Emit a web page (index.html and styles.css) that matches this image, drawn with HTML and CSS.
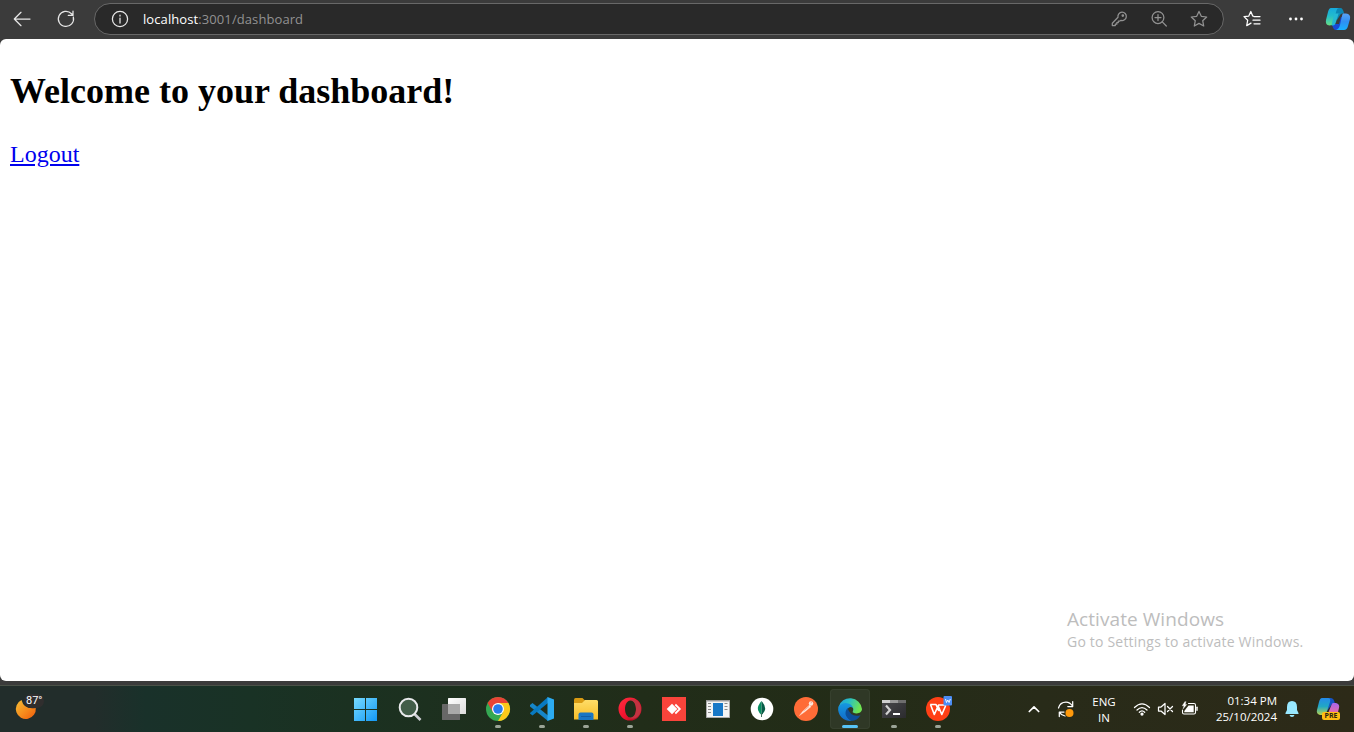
FILE: index.html
```html
<!DOCTYPE html>
<html lang="en">
<head>
<meta charset="utf-8">
<title>Dashboard</title>
<link rel="stylesheet" href="styles.css">
</head>
<body>
<div class="screen">
  <header class="toolbar">
    <button class="tool back" aria-label="Back"><svg width="18" height="16" viewBox="0 0 18 16" class="line light"><path d="M17 8H1.5M8 1.3L1.3 8L8 14.7"/></svg></button>
    <button class="tool reload" aria-label="Reload"><svg width="18" height="18" viewBox="0 0 18 18" class="line light"><path d="M16.3 7A7.6 7.6 0 1 1 14.5 3.7L16 5.3M16 1V5.4H11.3"/></svg></button>
    <div class="address">
      <svg class="line light info" width="18" height="18" viewBox="0 0 18 18"><circle cx="9" cy="9" r="7.6"/><path d="M9 8V13M9 5V6"/></svg>
      <span class="url"><b>localhost</b>:3001/dashboard</span>
      <div class="address-actions">
        <svg class="line dim" width="18" height="18" viewBox="0 0 18 18"><path d="M8 7.2A4.2 4.2 0 1 1 11 10.4L9.8 11H8.3V12.6H6.8V14.2H5.3V15.6H2.3V13.2L8 7.2"/><circle cx="12.8" cy="5.6" r=".7"/></svg>
        <svg class="line dim" width="18" height="18" viewBox="0 0 18 18"><circle cx="8" cy="7.6" r="5.9"/><path d="M12.3 11.9L16.3 16M5 7.6H11M8 4.6V10.6"/></svg>
        <svg class="line dim" width="18" height="18" viewBox="0 0 18 18"><path d="M9 1.4L11.3 6.3L16.7 7L12.7 10.7L13.7 16L9 13.4L4.3 16L5.3 10.7L1.3 7L6.7 6.3Z"/></svg>
      </div>
    </div>
    <button class="tool favorites" aria-label="Favorites"><svg width="18" height="18" viewBox="0 0 18 18" class="line white"><path d="M10.3 6.1H9.7L7.8 1.5L5.8 6.1L1 6.6L4.7 10.2L3.7 15.6L8 13.1M11 6.6H17M10 10.2H17M11 13.8H17"/></svg></button>
    <button class="tool more" aria-label="More"><svg width="16" height="4" viewBox="0 0 16 4"><g fill="#fff"><circle cx="2.5" cy="2" r="1.4"/><circle cx="8" cy="2" r="1.4"/><circle cx="13.5" cy="2" r="1.4"/></g></svg></button>
    <button class="tool copilot" aria-label="Copilot"><svg width="26" height="24" viewBox="0 0 26 24">
      <defs>
        <linearGradient id="ca" x1="0" y1="0" x2="0" y2="1"><stop stop-color="#16a9dd"/><stop offset=".45" stop-color="#22bccb"/><stop offset="1" stop-color="#68df83"/></linearGradient>
        <linearGradient id="cb" x1="0" y1="0" x2="0" y2="1"><stop stop-color="#5aa2f5"/><stop offset=".5" stop-color="#2f8ff2"/><stop offset="1" stop-color="#18b0ff"/></linearGradient>
      </defs>
      <path d="M7 17H14L16 10H20L18.500 18Q17.500 23 14 23H11Q8 23 7 17Z" fill="#1749d5"/>
      <path d="M6 1H15.500Q18 1 19 6.500H17Q15 7 14.500 9L12 13L9 7Z" fill="#0b86b4"/>
      <path d="M6 1H14Q12 1 11.300 4L8 16Q7.500 18.500 4.500 18.500Q0 18 1 13L3 5Q4 1 6 1Z" fill="url(#ca)"/>
      <path d="M8 12L6.500 18.500H8Q10 18.500 11 15L13.500 7Q14 6 15.500 6.500H9.500Z" fill="#25b8d4"/>
      <path d="M18 6.500H21Q26 7 25 12L23 19Q22 23 19 23H11Q14 22 15 18L17 9Q17.300 7 18 6.500Z" fill="url(#cb)"/>
    </svg></button>
  </header>

  <main class="page">
    <h2>Welcome to your dashboard!</h2>
    <a href="#">Logout</a>
    <aside class="activation"><div class="activation-title">Activate Windows</div><div class="activation-text">Go to Settings to activate Windows.</div></aside>
  </main>

  <footer class="taskbar">
    <div class="weather">
      <svg width="22" height="24" viewBox="0 0 22 24"><defs><linearGradient id="moon" x1="0" y1="0" x2="1" y2="1"><stop stop-color="#f5bd35"/><stop offset=".55" stop-color="#f58a1c"/><stop offset="1" stop-color="#ee5a0b"/></linearGradient></defs><path d="M6.500 4A10 10 0 1 0 20.800 12Q9 14 6.500 4Z" fill="url(#moon)"/></svg>
      <span class="temperature">87°</span>
    </div>
    <nav class="apps">
      <div class="app"><svg viewBox="0 0 24 24"><defs><linearGradient id="win" gradientUnits="userSpaceOnUse" x1="0" y1="0" x2="24" y2="24"><stop stop-color="#79dcff"/><stop offset="1" stop-color="#1197f5"/></linearGradient></defs><path fill="url(#win)" d="M0 1H11V12H0ZM12 1H23V12H12ZM0 13H11V24H0ZM12 13H23V24H12Z"/></svg></div>
      <div class="app"><svg viewBox="0 0 24 24"><path d="M16.500 17L22.500 23" stroke="#ced0d5" stroke-width="2.700"/><circle cx="10.500" cy="10.500" r="8.800" fill="#425d49" stroke="#e9eaec" stroke-width="2"/></svg></div>
      <div class="app"><svg viewBox="0 0 24 24"><defs><linearGradient id="tv" x1="0" y1="0" x2="1" y2="1"><stop stop-color="#fff"/><stop offset="1" stop-color="#dcdcdc"/></linearGradient></defs><rect x="6" y="1" width="18" height="16" rx=".6" fill="url(#tv)"/><rect y="7" width="18" height="16" rx=".6" fill="#676767"/><path d="M6 7H18V17H6Z" fill="#a9a9a9"/></svg></div>
      <div class="app running"><svg viewBox="0 0 24 24"><circle cx="12" cy="12" r="12" fill="#35a853"/><path d="M1.600 6A12 12 0 0 1 22.400 6H12L6.800 15Z" fill="#ea4335"/><path d="M12 6H22.400A12 12 0 0 1 12 24L17.200 15Z" fill="#fbc91b"/><circle cx="12" cy="12" r="6" fill="#fff"/><circle cx="12" cy="12" r="4.800" fill="#287bed"/></svg></div>
      <div class="app running"><svg viewBox="0 0 24 24"><path d="M0 8L2.500 6L18 18.500V24L0 9.500Z" fill="#1686c8"/><path d="M0 16L18 0V6L2.500 18.500L0 16.500Z" fill="#087ac1"/><path d="M17.500 0L24 2.500V21.500L17.500 24Z" fill="#2cacf2"/></svg></div>
      <div class="app running"><svg viewBox="0 0 24 24"><defs><linearGradient id="folder" x1="0" y1="0" x2="0" y2="1"><stop stop-color="#ffdd68"/><stop offset="1" stop-color="#f6bd28"/></linearGradient></defs><path d="M0 3Q0 1 1.500 1H8.500L11 3.500H22.500Q24 3.500 24 5V8H0Z" fill="#d99b13"/><path d="M0 6H8L11 3H22.500Q24 3 24 4.500V22.500H0Z" fill="url(#folder)"/><path d="M4.500 23V17.500Q4.500 15.500 6.500 15.500H17.500Q19.500 15.500 19.500 17.500V23Z" fill="#1976c4"/><path d="M7 19H17V20H7Z" fill="#125da4"/></svg></div>
      <div class="app running"><svg viewBox="0 0 24 24"><defs><linearGradient id="opera" x1="0" y1="0" x2="1" y2="1"><stop stop-color="#ff3040"/><stop offset=".5" stop-color="#f2142f"/><stop offset="1" stop-color="#a50920"/></linearGradient></defs><path fill-rule="evenodd" d="M12 .5A11.500 11.500 0 1 0 12 23.500A11.500 11.500 0 1 0 12 .5ZM13 3.200C16.300 3.200 18 7 18 12S16.300 20.800 13 20.800S7 17 7 12S9.500 3.200 13 3.200Z" fill="url(#opera)"/><path d="M10.500 3.500C16 0 23 4.500 23 12S16 24 10.500 20.500C15 21.500 18 17.500 18 12S15 2.500 10.500 3.500Z" fill="#c23341"/></svg></div>
      <div class="app"><svg viewBox="0 0 24 24"><path fill="#f9443b" d="M0 0H24V24H0Z"/><path d="M10 6.700L15.300 12L10 17.300L4.700 12Z" fill="#fff"/><path d="M13.300 7.500L17.800 12L13.300 16.500" fill="none" stroke="#fff" stroke-width="1.800"/></svg></div>
      <div class="app"><svg viewBox="0 0 24 24"><path fill="#999" d="M0 3H24V21H0Z"/><path fill="#f4f4f4" d="M.8 4.500H23.200V20.200H.8Z"/><path fill="#1878c7" d="M7 6H17V19H7Z"/><path d="M2 6.500H5M2 9.500H5M2 12.500H5M2 15.500H5M18.500 6.500H21.500M18.500 9.500H21.500M18.500 12.500H21.500" stroke="#8a8a8a"/></svg></div>
      <div class="app"><svg viewBox="0 0 24 24"><circle cx="12" cy="12" r="11.300" fill="#fff"/><path d="M11.500 4Q7 9 8 13Q9 16 11.500 18Z" fill="#078d60"/><path d="M11.500 4Q16 9 15 13Q14 16 11.500 18Z" fill="#075d48"/><path d="M11.500 16V20" stroke="#44725f"/></svg></div>
      <div class="app"><svg viewBox="0 0 24 24"><circle cx="12" cy="12" r="12" fill="#ff6c37"/><circle cx="17" cy="6.500" r="2.200" fill="#ffe9df"/><path d="M15.500 8L17 9.700L10.500 15L5.500 18.500L9 14Z" fill="#fff1e9" stroke="#ffd7c5" stroke-width=".5"/><path d="M9.500 14L15 9.500M16.500 6L18 5.500" stroke="#f38259" stroke-width=".6"/></svg></div>
      <div class="app active"><svg viewBox="0 0 24 24"><defs><linearGradient id="edge" x1="0" y1="0" x2="1" y2=".3"><stop stop-color="#229bda"/><stop offset=".45" stop-color="#27bfc8"/><stop offset="1" stop-color="#6ee451"/></linearGradient><linearGradient id="edgeb" x1="0" y1="0" x2="0" y2="1"><stop stop-color="#1599e0"/><stop offset="1" stop-color="#1269c7"/></linearGradient></defs><path d="M.5 10A12 12 0 0 1 24 12C24 16 19 17.500 15 15.500C14 14.800 16 13.500 15 11Q11 5 .5 10Z" fill="url(#edge)"/><path d="M.3 10Q4 5.500 9 6.200Q14 7 15 11Q12 8.500 9.500 12Q5.500 19 13.500 23.900A12 12 0 0 1 .3 10Z" fill="url(#edgeb)"/><path d="M9.500 11Q4 18.500 13.500 23.900Q19 24 22.500 18.200Q13 21 9.500 11Z" fill="#0c4f99"/></svg></div>
      <div class="app running"><svg viewBox="0 0 24 24"><defs><linearGradient id="term" x1="0" y1="0" x2="1" y2="1"><stop stop-color="#4a4a4d"/><stop offset="1" stop-color="#2b2b2e"/></linearGradient></defs><path fill="url(#term)" d="M0 3H24V21H0Z"/><path fill="#cfcfcf" d="M0 3H8V6H0Z"/><path fill="#999" d="M8 3H16V6H8Z"/><path fill="#6e6e6e" d="M16 3H24V6H16Z"/><path d="M4 8.500L8 13L4 17.500" fill="none" stroke="#d2d2d2" stroke-width="2.200"/><path d="M11 17H18" stroke="#fff" stroke-width="2"/></svg></div>
      <div class="app running"><svg viewBox="0 0 24 24"><circle cx="12" cy="12" r="12" fill="#ff4016"/><path d="M4.200 7.500H10L12.800 14M4.500 7.500L8.300 17.500L12.500 8H18.500Q20 8 19.300 9.500L15.800 17.500L12 8.500" fill="none" stroke="#fff" stroke-width="1.600" stroke-linejoin="round"/><rect x="17.500" y="-1" width="8.500" height="9.500" rx="1" fill="#4c8df5"/><path d="M19.500 2L20.500 5.500L21.800 3L23.100 5.500L24.300 2" fill="none" stroke="#fff" stroke-width=".9"/></svg></div>
    </nav>
    <div class="tray">
      <div class="tray-item chevron"><svg width="12" height="8" viewBox="0 0 12 8" class="line white"><path d="M1.300 6.500L6 1.800L10.700 6.500" stroke-width="1.700"/></svg></div>
      <div class="tray-item sync"><svg width="18" height="18" viewBox="0 0 18 18" class="line white"><path d="M1.500 8Q3 2 9 2Q13 2 15.500 6M15.700 1.500V6.500H10.800M2.300 16.500V12H7M2.500 12.300Q4.500 15.500 8 16"/><circle cx="12.500" cy="13" r="4" fill="#ff9a0c" stroke="none"/></svg></div>
      <div class="language">ENG<br>IN</div>
      <div class="tray-item wifi"><svg width="18" height="16" viewBox="0 0 18 16" class="line white"><path d="M1.500 6.500Q9-.8 16.500 6.500M4 9Q9 4.100 14 9M6.300 11.300Q9 8.600 11.700 11.300"/><circle cx="9" cy="13" r="1" fill="#fff"/></svg></div>
      <div class="tray-item sound"><svg width="17" height="14" viewBox="0 0 17 14" class="line white"><path d="M1.500 5H4L8 1.500V12.500L4 9H1.500ZM10.500 4.500L15.500 9.500M15.500 4.500L10.500 9.500"/></svg></div>
      <div class="tray-item battery"><svg width="18" height="16" viewBox="0 0 18 16" class="line white"><path d="M7.500 2.500H13Q14.500 2.500 14.500 4V11.500Q14.500 13 13 13H3Q1.500 13 1.500 11.500V9" stroke-width="1.100"/><path d="M7.500 4.500H12.700V11.200H3.300V10Z" fill="#fff" stroke="none"/><path d="M16 6.300V9.300" stroke-width="1.400"/><path d="M4 .5L1.200 4.800H3L2 8L5.800 3.500H4.200L5 .7" fill="#fff" stroke-width=".3"/></svg></div>
      <time class="clock">01:34 PM<br>25/10/2024</time>
      <div class="tray-item bell"><svg width="16" height="18" viewBox="0 0 16 18"><path d="M8 1Q13 1 13 7V10L14.500 13V14H1.500V13L3 10V7Q3 1 8 1ZM5.500 15H10.500Q10 17 8 17Q6 17 5.500 15Z" fill="#98e8ff"/></svg></div>
      <div class="copilot-preview"><svg width="26" height="26" viewBox="0 0 26 26"><defs><linearGradient id="pa" x1="0" y1="0" x2="0" y2="1"><stop stop-color="#2489ea"/><stop offset=".5" stop-color="#21a8c4"/><stop offset="1" stop-color="#bad34c"/></linearGradient><linearGradient id="pb" x1="0" y1="0" x2="0" y2="1"><stop stop-color="#a765ef"/><stop offset="1" stop-color="#ff6d8c"/></linearGradient></defs><path d="M7 2H16Q19 2 20 8H17L12 15Z" fill="#1553c4"/><path d="M7 2H13Q16 2 15 6L12 15Q11 19 8 19H5Q1 18 2 14L4 6Q5 2 7 2Z" fill="url(#pa)"/><path d="M18 7H21Q25 8 24 12L22 20H12L16 10Q17 7 18 7Z" fill="url(#pb)"/></svg><span class="pre">PRE</span></div>
    </div>
  </footer>
</div>
</body>
</html>
```
FILE: styles.css
```css
* { box-sizing: border-box; }
body { margin: 0; overflow: hidden; }
svg { display: block; flex: none; overflow: visible; }
.screen { width: 1354px; height: 732px; display: flex; flex-direction: column; background: #3b3b3b; font-family: "Open Sans", "Noto Sans", sans-serif; }
.line { fill: none; stroke-width: 1.25; stroke-linecap: round; stroke-linejoin: round; }
.light { stroke: #e7e7e7; }
.white { stroke: #fff; }
.dim { stroke: #929292; }

.toolbar { height: 39px; flex: none; display: flex; align-items: center; padding-bottom: 1px; }
.tool { height: 32px; padding: 0; border: 0; background: none; display: flex; align-items: center; justify-content: center; flex: none; }
.back { width: 44px; }
.reload { width: 44px; }
.address { width: 1130px; height: 32px; margin-left: 6px; padding: 0 15px 0 16px; border: 1px solid #686868; border-radius: 16px; background: #292929; display: flex; align-items: center; }
.url { margin-left: 14px; font-size: 13px; line-height: 18px; letter-spacing: .09px; color: #929292; white-space: nowrap; }
.url b { font-weight: 400; color: #fff; }
.address-actions { margin-left: auto; display: flex; gap: 22px; }
.favorites { width: 44px; margin-left: 6px; }
.more { width: 44px; }
.copilot { width: 26px; margin-left: 7px; }

.page { height: 642px; flex: none; padding: 31px 10px; border-radius: 6px; background: #fff; font-family: "Liberation Serif", serif; font-size: 24px; line-height: 28px; position: relative; }
.page h2 { margin: 0 0 28px; font-size: 36px; line-height: 42px; }
.page a { color: #0000ee; }
.activation { position: absolute; left: 1067px; top: 567px; font-family: "Open Sans", sans-serif; color: #bdbdbd; white-space: nowrap; }
.activation-title { font-size: 19px; line-height: 26px; letter-spacing: .07px; }
.activation-text { font-size: 14px; line-height: 20px; letter-spacing: .2px; }

.taskbar { height: 47px; margin-top: 4px; flex: none; display: flex; border-top: 1px solid #4a5147; background: linear-gradient(90deg, #222d2b 0, #222d2b 95px, #19312a 145px, #193225 250px, #1b3121 350px, #1e2f1d 500px, #212d19 640px, #232c17 850px, #282b19 1040px, #2d2a18 1354px); color: #fff; }
.weather { width: 344px; padding: 10px 0 0 15px; display: flex; align-items: flex-start; }
.temperature { width: 20px; height: 14px; margin: -2px 0 0 -13px; border-radius: 7px; background: #302e2e; font-family: Roboto, sans-serif; font-size: 11px; line-height: 13px; padding-left: 2px; z-index: 1; }
.apps { width: 616px; display: flex; }
.app { width: 44px; height: 46px; padding-top: 11px; display: flex; flex-direction: column; align-items: center; }
.app svg { width: 24px; height: 24px; }
.running::after { content: ""; width: 6px; height: 3px; margin-top: 4px; border-radius: 2px; background: #9ba497; }
.active { width: 40px; height: 40px; margin: 3px 2px 0; padding-top: 8px; border-radius: 4px; background: #2f3826; box-shadow: inset 0 0 0 1px #37402e; }
.active::after { content: ""; width: 16px; height: 3px; margin-top: 4px; border-radius: 2px; background: #57c3f5; }
.tray { width: 336px; height: 46px; margin-left: 58px; display: flex; align-items: center; font-size: 11.5px; line-height: 16px; }
.tray-item { width: 24px; display: flex; justify-content: center; }
.chevron, .sync { width: 32px; }
.language { width: 44px; padding-top: 2px; text-align: center; }
.wifi { margin-left: 4px; }
.sound { width: 23px; }
.battery { margin-left: 1px; }
.clock { width: 75px; text-align: right; white-space: nowrap; }
.bell { margin-left: 3px; }
.copilot-preview { margin-left: 11px; position: relative; }
.pre { position: absolute; left: 7px; top: 16px; width: 18px; height: 8px; border-radius: 2px; background: #ffbd13; color: #2b2411; font-size: 7px; font-weight: 700; line-height: 8px; text-align: center; }
```
